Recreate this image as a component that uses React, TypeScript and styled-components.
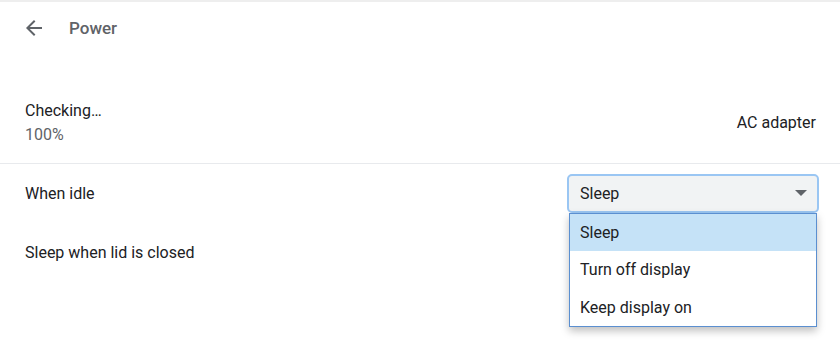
import React from "react";
import styled, { createGlobalStyle } from "styled-components";

const Global = createGlobalStyle`
  html, body { margin: 0; padding: 0; background: #fff; }
  body { font-family: Roboto, "Noto Sans", sans-serif; -webkit-font-smoothing: antialiased; }
`;

const Page = styled.div`
  width: 840px;
  height: 358px;
  border-top: 2px solid #eeeeee;
  box-sizing: border-box;
  position: relative;
  overflow: hidden;
`;

const Header = styled.div`
  display: flex;
  align-items: center;
  height: 52px;
  padding-left: 22px;
`;

const BackButton = styled.div`
  width: 24px;
  height: 24px;
  display: flex;
  color: #5f6368;
`;

const Title = styled.div`
  margin-left: 23px;
  font-size: 17px;
  font-weight: 500;
  color: #5f6368;
`;

const BatteryRow = styled.div`
  display: flex;
  align-items: center;
  justify-content: space-between;
  box-sizing: border-box;
  height: 83px;
  margin-top: 27px;
  padding: 0 24px 0 25px;
  border-bottom: 1px solid #e8eaed;
`;

const Section = styled.div`
  padding: 0 24px 0 25px;
`;

const Stack = styled.div`
  display: flex;
  flex-direction: column;
  gap: 5px;
`;

const Primary = styled.div`
  font-size: 16px;
  color: #202124;
`;

const Secondary = styled.div`
  font-size: 16px;
  color: #5f6368;
`;

const SettingRow = styled.div<{ $h: number }>`
  display: flex;
  align-items: center;
  justify-content: space-between;
  height: ${(p) => p.$h}px;
`;

const SelectWrap = styled.div`
  position: relative;
  width: 252px;
  margin-right: -3px;
`;

const SelectBox = styled.div`
  height: 39px;
  box-sizing: border-box;
  border: 2px solid #9ac6f3;
  border-radius: 5px;
  background: #f1f3f4;
  display: flex;
  align-items: center;
  justify-content: space-between;
  padding: 0 10px 0 11px;
  font-size: 16px;
  color: #202124;
`;

const Caret = styled.div`
  width: 0;
  height: 0;
  border-left: 6px solid transparent;
  border-right: 6px solid transparent;
  border-top: 6px solid #5f6368;
`;

const Menu = styled.div`
  position: absolute;
  top: 39px;
  left: 2px;
  width: 248px;
  box-sizing: border-box;
  border: 1px solid #5b8fd0;
  background: #fff;
  box-shadow: 0 4px 8px rgba(0, 0, 0, 0.25);
  z-index: 2;
`;

const Option = styled.div<{ $active?: boolean }>`
  height: 37.5px;
  display: flex;
  align-items: center;
  padding-left: 10px;
  font-size: 16px;
  color: #202124;
  background: ${(p) => (p.$active ? "#c5e2f7" : "#fff")};
`;

export default function App() {
  return (
    <>
      <Global />
      <Page>
        <Header>
          <BackButton>
            <svg width="24" height="24" viewBox="0 0 24 24" fill="currentColor">
              <path d="M20 11H7.83l5.59-5.59L12 4l-8 8 8 8 1.41-1.41L7.83 13H20v-2z" />
            </svg>
          </BackButton>
          <Title>Power</Title>
        </Header>
        <BatteryRow>
          <Stack>
            <Primary>Checking…</Primary>
            <Secondary>100%</Secondary>
          </Stack>
          <Primary>AC adapter</Primary>
        </BatteryRow>
        <Section>
          <SettingRow $h={58}>
            <Primary>When idle</Primary>
            <SelectWrap>
              <SelectBox>
                <span>Sleep</span>
                <Caret />
              </SelectBox>
              <Menu>
                <Option $active>Sleep</Option>
                <Option>Turn off display</Option>
                <Option>Keep display on</Option>
              </Menu>
            </SelectWrap>
          </SettingRow>
          <SettingRow $h={60}>
            <Primary>Sleep when lid is closed</Primary>
          </SettingRow>
        </Section>
      </Page>
    </>
  );
}
